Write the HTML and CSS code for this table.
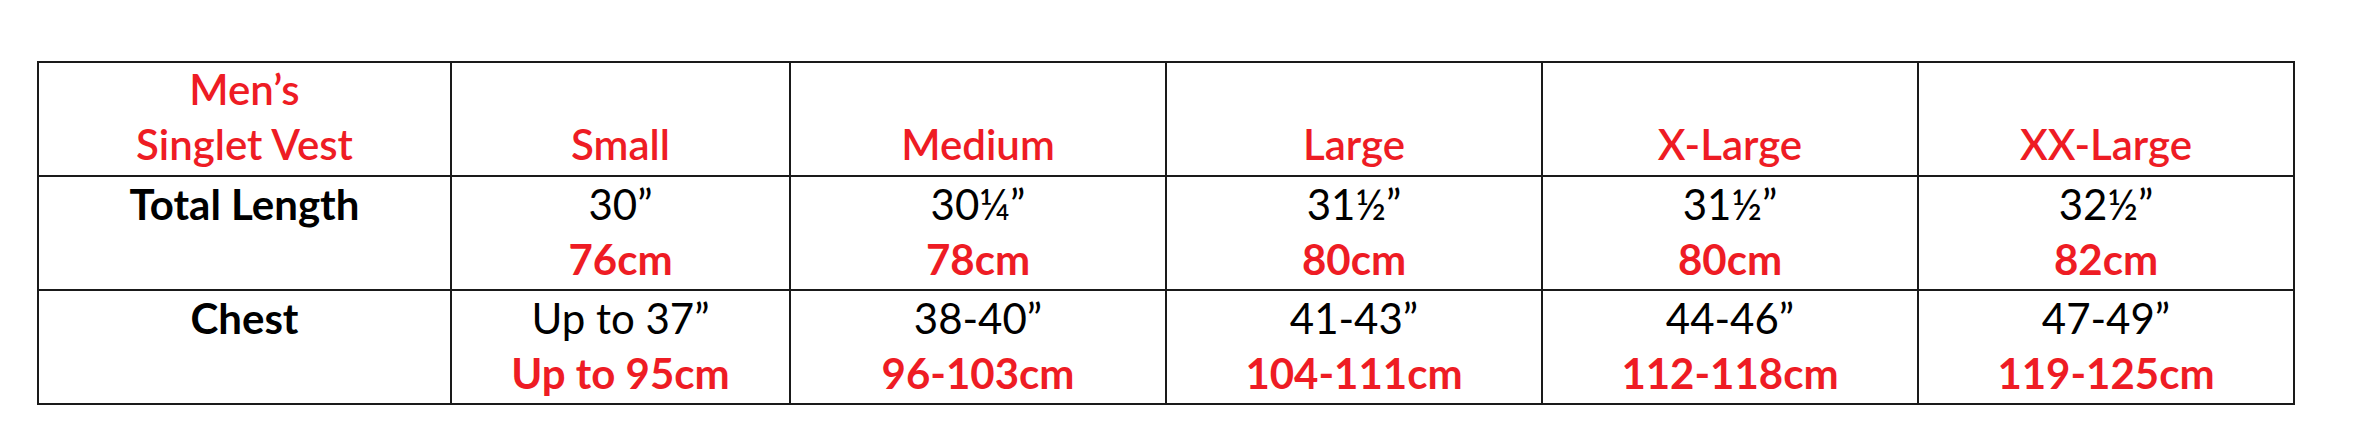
FILE: index.html
```html
<!DOCTYPE html>
<html lang="en">
<head>
<meta charset="utf-8">
<title>Men’s Singlet Vest sizes</title>
<link rel="stylesheet" href="styles.css">
</head>
<body>
<div class="chart">
  <div class="cell head label"><span class="red">Men’s</span><span class="red">Singlet Vest</span></div>
  <div class="cell head"><span class="red">Small</span></div>
  <div class="cell head"><span class="red">Medium</span></div>
  <div class="cell head"><span class="red">Large</span></div>
  <div class="cell head"><span class="red">X-Large</span></div>
  <div class="cell head"><span class="red">XX-Large</span></div>

  <div class="cell rowname">Total Length</div>
  <div class="cell"><span>30”</span><span class="cm">76cm</span></div>
  <div class="cell"><span>30¼”</span><span class="cm">78cm</span></div>
  <div class="cell"><span>31½”</span><span class="cm">80cm</span></div>
  <div class="cell"><span>31½”</span><span class="cm">80cm</span></div>
  <div class="cell"><span>32½”</span><span class="cm">82cm</span></div>

  <div class="cell rowname">Chest</div>
  <div class="cell"><span>Up to 37”</span><span class="cm">Up to 95cm</span></div>
  <div class="cell"><span>38-40”</span><span class="cm">96-103cm</span></div>
  <div class="cell"><span>41-43”</span><span class="cm">104-111cm</span></div>
  <div class="cell"><span>44-46”</span><span class="cm">112-118cm</span></div>
  <div class="cell"><span>47-49”</span><span class="cm">119-125cm</span></div>
</div>
</body>
</html>
```
FILE: styles.css
```css
html, body {
  margin: 0;
  padding: 0;
  background: #fff;
}
body {
  padding: 61px 0 0 37px;
  font-family: Lato, "Noto Sans", "Liberation Sans", sans-serif;
  font-size: 42px;
  line-height: 55px;
  color: #000;
}
.chart {
  display: grid;
  grid-template-columns: 411px 337px 374px 374px 374px 374px;
  grid-template-rows: 112px 112px 112px;
  gap: 2px;
  padding: 2px;
  background: #1a1a1a;
  width: max-content;
}
.cell {
  background: #fff;
  display: flex;
  flex-direction: column;
  align-items: center;
  justify-content: flex-start;
  text-align: center;
  white-space: nowrap;
}
.head {
  justify-content: flex-end;
  padding-bottom: 3px;
}
.red {
  color: #ee1c24;
  font-weight: 600;
}
.cm {
  color: #ee1c24;
  font-weight: 700;
}
.rowname {
  font-weight: 700;
}
```
